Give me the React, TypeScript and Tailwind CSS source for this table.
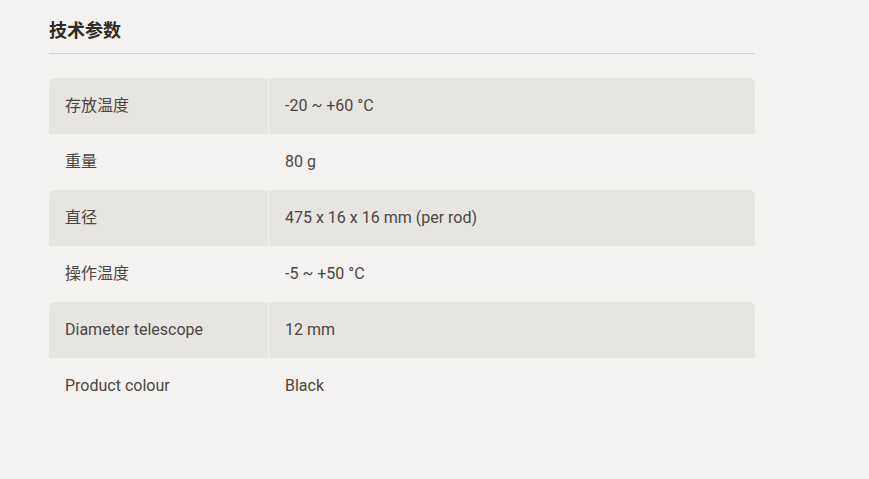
import React from "react";

const rows: [string, string][] = [
  ["存放温度", "-20 ~ +60 °C"],
  ["重量", "80 g"],
  ["直径", "475 x 16 x 16 mm (per rod)"],
  ["操作温度", "-5 ~ +50 °C"],
  ["Diameter telescope", "12 mm"],
  ["Product colour", "Black"],
];

export default function App() {
  return (
    <div
      className="min-h-[479px] w-full bg-[#f3f2f0] pl-[49px] pt-[19px]"
      style={{ fontFamily: 'Roboto, "Noto Sans CJK SC", sans-serif' }}
    >
      <div className="w-[706px]">
        <h2 className="text-[18px] font-bold leading-[24px] text-[#2f2a26]">技术参数</h2>
        <div className="mt-[10px] h-px bg-[#d3d1ce]" />
        <div className="mt-[24px] flex flex-col">
          {rows.map(([k, v], i) => (
            <div
              key={k}
              className={
                "flex h-[56px] items-center text-[16px] text-[#4d4642] " +
                (i % 2 === 0 ? "rounded-t-[6px] bg-[#e7e5e2]" : "")
              }
            >
              <div
                className={
                  "flex h-full w-[220px] items-center pl-[16px] " +
                  (i % 2 === 0 ? "border-r border-[#f5f4f2]" : "border-r border-transparent")
                }
              >
                {k}
              </div>
              <div className="pl-[16px]">{v}</div>
            </div>
          ))}
        </div>
      </div>
    </div>
  );
}
